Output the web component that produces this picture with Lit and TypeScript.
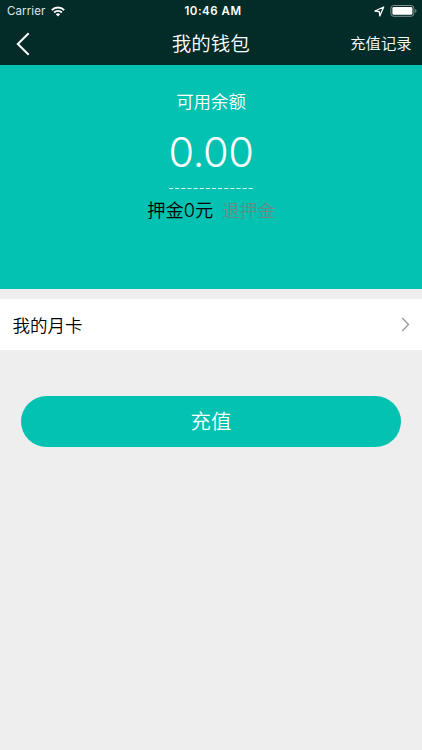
import { LitElement, html, css } from "lit";
import { customElement } from "lit/decorators.js";

@customElement("app-root")
export class AppRoot extends LitElement {
  static styles = css`
    :host {
      display: flex;
      flex-direction: column;
      height: 750px;
      background: #eeeeee;
      color: #000;
      font-family: Inter, "Noto Sans CJK SC", sans-serif;
      font-weight: 350;
      overflow: hidden;
    }
    .header {
      flex: none;
      height: 64.5px;
      background: #032c28;
      color: #fff;
    }
    .status,
    .nav {
      display: grid;
      grid-template-columns: 1fr auto 1fr;
      align-items: center;
    }
    .status {
      height: 22px;
      padding: 0 5px 0 7px;
      font-size: 11.5px;
      line-height: 22px;
    }
    .carrier,
    .power {
      display: flex;
      align-items: center;
    }
    .carrier {
      gap: 6px;
      font-weight: 400;
      letter-spacing: 0.1px;
      color: #dfe7e6;
    }
    .time {
      margin-left: 2px;
      font-weight: 600;
      letter-spacing: 0.5px;
    }
    .power {
      justify-content: flex-end;
      gap: 5px;
    }
    .nav {
      height: 42px;
      padding: 0 10.5px 0 16px;
    }
    svg {
      display: block;
    }
    .title {
      margin: 1px 0 0 -6px;
      font-size: 19.5px;
      line-height: 42px;
    }
    .record {
      justify-self: end;
      margin-top: 1px;
      font-size: 15.3px;
      line-height: 42px;
    }
    .balance {
      flex: none;
      box-sizing: border-box;
      height: 224.5px;
      padding-top: 24px;
      background: #04c2b2;
      display: flex;
      flex-direction: column;
      align-items: center;
      color: #fff;
    }
    .label {
      font-size: 17.4px;
      line-height: 26px;
    }
    .amount {
      margin-top: 11px;
      font-size: 41.5px;
      line-height: 52px;
      letter-spacing: -0.4px;
    }
    .dash {
      margin-top: 9px;
    }
    .deposit {
      margin-top: 8px;
      display: flex;
      gap: 9px;
      font-size: 18.2px;
      line-height: 26px;
      color: #000;
    }
    .refund {
      padding-top: 1px;
      color: #6a8985;
      font-size: 17.5px;
    }
    .row {
      flex: none;
      margin-top: 10px;
      height: 51px;
      padding: 0 12px 0 12.5px;
      display: flex;
      align-items: center;
      justify-content: space-between;
      background: #fff;
      font-size: 17.5px;
    }
    .charge {
      flex: none;
      margin: 46px 21px 0;
      height: 51px;
      border: 0;
      border-radius: 26px;
      background: #04c2b2;
      color: #fff;
      font: 350 20.4px/51px Inter, "Noto Sans CJK SC", sans-serif;
      padding: 0;
    }
  `;

  render() {
    return html`
      <div class="header">
        <div class="status">
          <div class="carrier">
            <span>Carrier</span>
            <svg width="14" height="11" viewBox="0 0 14 11" fill="none" stroke="#fff">
              <path d="M.8 4.1a8.8 8.8 0 0 1 12.4 0" stroke-width="1.9" />
              <path d="M3.1 6.5a5.5 5.5 0 0 1 7.8 0" stroke-width="1.8" />
              <path d="M7 10.6 4.8 8.3a3.2 3.2 0 0 1 4.4 0z" fill="#fff" stroke="none" />
            </svg>
          </div>
          <div class="time">10:46 AM</div>
          <div class="power">
            <svg width="11" height="11" viewBox="0 0 11 11" fill="none" stroke="#fff" stroke-width="1.3" stroke-linejoin="round">
              <path d="M9.7 1 1 5l4.3.6.5 4.3z" />
            </svg>
            <svg width="27" height="12" viewBox="0 0 27 12">
              <rect x=".9" y=".5" width="23" height="10.8" rx="2.8" fill="none" stroke="#81918f" />
              <rect x="2.4" y="2" width="20" height="7.8" rx="1.4" fill="#fff" />
              <path d="M25.2 4v3.8q1.3-.6 1.3-1.9T25.2 4z" fill="#81918f" />
            </svg>
          </div>
        </div>
        <div class="nav">
          <svg width="14" height="24" viewBox="0 0 14 24" fill="none" stroke="#fff" stroke-width="2">
            <path d="M12.7 1.2 1.8 12l10.9 10.8" />
          </svg>
          <div class="title">我的钱包</div>
          <div class="record">充值记录</div>
        </div>
      </div>
      <div class="balance">
        <div class="label">可用余额</div>
        <div class="amount">0.00</div>
        <svg class="dash" width="84" height="2" viewBox="0 0 84 2">
          <path d="M0 1.5h84" stroke="#d5f5f1" stroke-width="1" stroke-dasharray="4.2 1.93" />
        </svg>
        <div class="deposit"><span>押金0元</span><span class="refund">退押金</span></div>
      </div>
      <div class="row">
        <span>我的月卡</span>
        <svg width="9" height="15" viewBox="0 0 9 15" fill="none" stroke="#999" stroke-width="1.3">
          <path d="M1.2 1 7.5 7.5 1.2 14" />
        </svg>
      </div>
      <button class="charge">充值</button>
    `;
  }
}
